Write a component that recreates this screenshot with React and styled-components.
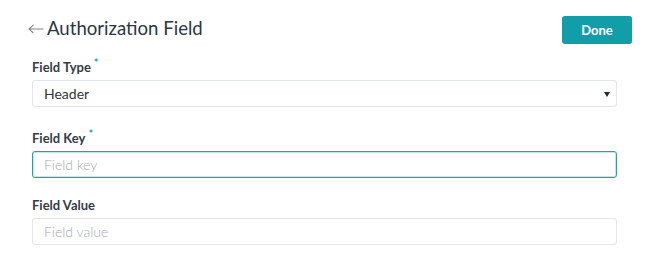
import React from 'react';
import styled, { createGlobalStyle } from 'styled-components';

const GlobalStyle = createGlobalStyle`
  html, body {
    margin: 0;
    padding: 0;
    background: #ffffff;
    font-family: Lato, "Open Sans", sans-serif;
  }
`;

const Page = styled.div`
  width: 650px;
  height: 272px;
  box-sizing: border-box;
  padding: 16px 18px 0 28px;
`;

const Header = styled.div`
  display: flex;
  justify-content: space-between;
  align-items: flex-start;
  height: 28px;
`;

const Title = styled.h1`
  margin: 0;
  display: flex;
  align-items: center;
  gap: 3px;
  font-size: 18.6px;
  font-weight: 400;
  color: #2c3540;
  line-height: 24px;
`;

const BackIcon = styled.svg`
  width: 16px;
  height: 10px;
  margin-top: 2px;
  display: block;
`;

const DoneButton = styled.button`
  width: 70px;
  height: 28px;
  border: none;
  border-radius: 3px;
  background: #129ea9;
  color: #ffffff;
  font-family: Lato, sans-serif;
  font-size: 13px;
  font-weight: 700;
  cursor: pointer;
`;

const Form = styled.div`
  width: 585px;
  margin-left: 4px;
  margin-top: 10px;
  display: flex;
  flex-direction: column;
`;

const Field = styled.div`
  display: flex;
  flex-direction: column;
  margin-bottom: 18px;
`;

const Label = styled.label`
  font-size: 13px;
  font-weight: 700;
  color: #333c46;
  line-height: 18px;
  margin-bottom: 4px;
  padding-top: ${p => (p.required ? '4px' : '0')};
`;

const Star = styled.sup`
  color: #1aa7b1;
  font-size: 11px;
  margin-left: 3px;
  vertical-align: 5px;
  line-height: 0;
`;

const Box = styled.div`
  position: relative;
  height: 27px;
  box-sizing: border-box;
  border: 1px solid ${p => (p.focused ? '#17a6b1' : '#e2e5e9')};
  box-shadow: ${p => (p.focused ? 'inset 0 0 0 1px rgba(23,166,177,0.25)' : 'none')};
  border-radius: 3px;
  display: flex;
  align-items: center;
  padding: 0 11px;
  font-size: 14px;
  color: ${p => (p.placeholder ? '#a6abb1' : '#30363c')};
  font-weight: ${p => (p.placeholder ? 300 : 400)};
`;

const Caret = styled.span`
  position: absolute;
  right: 6px;
  top: 11px;
  width: 0;
  height: 0;
  border-left: 3px solid transparent;
  border-right: 3px solid transparent;
  border-top: 5px solid #1d2a38;
`;

export default function App() {
  return (
    <Page>
      <GlobalStyle />
      <Header>
        <Title>
          <BackIcon viewBox="0 0 16 10">
            <path d="M15.5 5H1M5.5 0.8L1 5l4.5 4.2" fill="none" stroke="#7d858d" strokeWidth="1.1" />
          </BackIcon>
          Authorization Field
        </Title>
        <DoneButton>Done</DoneButton>
      </Header>
      <Form>
        <Field>
          <Label required>Field Type<Star>*</Star></Label>
          <Box>
            Header
            <Caret />
          </Box>
        </Field>
        <Field>
          <Label required>Field Key<Star>*</Star></Label>
          <Box focused placeholder>Field key</Box>
        </Field>
        <Field>
          <Label>Field Value</Label>
          <Box placeholder>Field value</Box>
        </Field>
      </Form>
    </Page>
  );
}
